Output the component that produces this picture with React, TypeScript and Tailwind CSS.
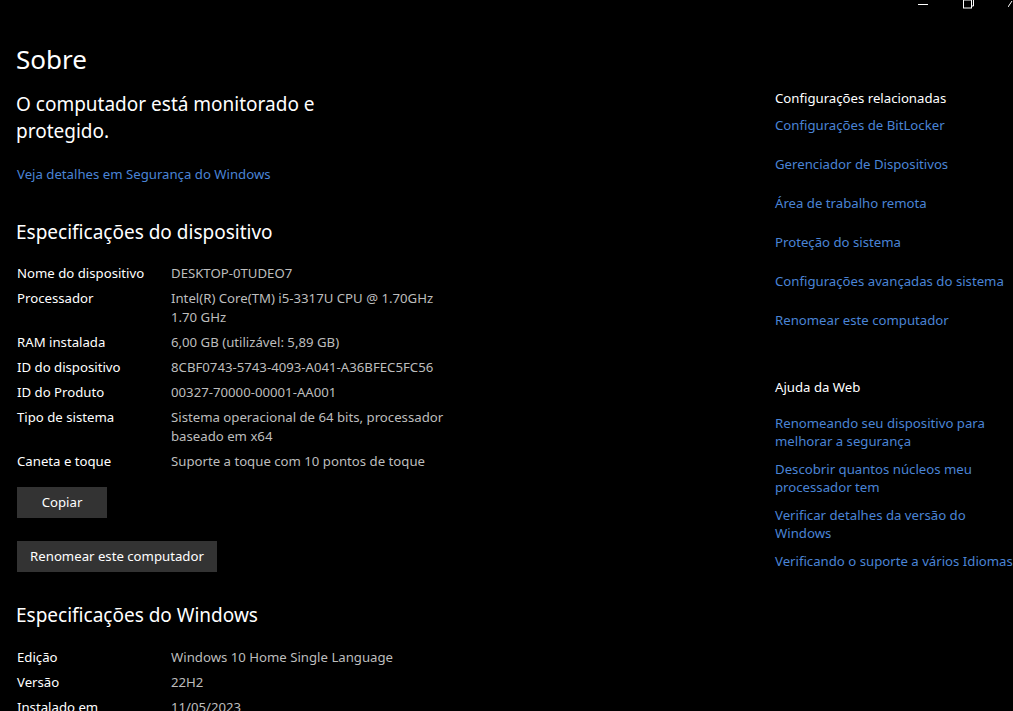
import React from "react"

const font = { fontFamily: '"Noto Sans", "Open Sans", sans-serif' }

type Spec = { label: string; value: string[] }

const deviceSpecs: Spec[] = [
  { label: "Nome do dispositivo", value: ["DESKTOP-0TUDEO7"] },
  { label: "Processador", value: ["Intel(R) Core(TM) i5-3317U CPU @ 1.70GHz", "1.70 GHz"] },
  { label: "RAM instalada", value: ["6,00 GB (utilizável: 5,89 GB)"] },
  { label: "ID do dispositivo", value: ["8CBF0743-5743-4093-A041-A36BFEC5FC56"] },
  { label: "ID do Produto", value: ["00327-70000-00001-AA001"] },
  { label: "Tipo de sistema", value: ["Sistema operacional de 64 bits, processador", "baseado em x64"] },
  { label: "Caneta e toque", value: ["Suporte a toque com 10 pontos de toque"] },
]

const windowsSpecs: Spec[] = [
  { label: "Edição", value: ["Windows 10 Home Single Language"] },
  { label: "Versão", value: ["22H2"] },
  { label: "Instalado em", value: ["11/05/2023"] },
]

const relatedLinks = [
  "Configurações de BitLocker",
  "Gerenciador de Dispositivos",
  "Área de trabalho remota",
  "Proteção do sistema",
  "Configurações avançadas do sistema",
  "Renomear este computador",
]

const webHelp = [
  ["Renomeando seu dispositivo para", "melhorar a segurança"],
  ["Descobrir quantos núcleos meu", "processador tem"],
  ["Verificar detalhes da versão do", "Windows"],
  ["Verificando o suporte a vários Idiomas"],
]

function SpecTable({ rows }: { rows: Spec[] }) {
  return (
    <div className="flex flex-col gap-[6px] pl-px text-[13.2px] leading-[19px]">
      {rows.map((row) => (
        <div key={row.label} className="flex">
          <div className="w-[154px] shrink-0 text-white">{row.label}</div>
          <div className="text-[#bdbdbd]">
            {row.value.map((line) => (
              <div key={line}>{line}</div>
            ))}
          </div>
        </div>
      ))}
    </div>
  )
}

function Button({ children, width }: { children: React.ReactNode; width: string }) {
  return (
    <button className={`${width} ml-px h-[31px] bg-[#333333] text-[13.2px] text-white`}>{children}</button>
  )
}

function CaptionButtons() {
  return (
    <div className="absolute right-0 top-0 flex h-[10px] items-start">
      <svg width="12" height="10" viewBox="0 0 12 10" className="mr-[33px]">
        <line x1="1" y1="4.5" x2="11" y2="4.5" stroke="#fff" strokeWidth="1" />
      </svg>
      <svg width="12" height="10" viewBox="0 0 12 10" className="mr-[34px]">
        <rect x="1.5" y="0" width="8" height="8" fill="none" stroke="#fff" strokeWidth="1" />
        <path d="M4 0 V-2 H11.5 V6 H9.5" fill="none" stroke="#fff" strokeWidth="1" />
      </svg>
      <svg width="5" height="10" viewBox="0 0 5 10">
        <line x1="0" y1="7" x2="4" y2="1" stroke="#fff" strokeWidth="1" />
      </svg>
    </div>
  )
}

export default function App() {
  return (
    <div className="relative h-[711px] w-full overflow-hidden bg-black text-white" style={font}>
      <CaptionButtons />
      <div className="flex">
        <div className="w-[775px] shrink-0 pl-4 pt-[40px]">
          <h1 className="text-[26px] leading-[38px] font-normal">Sobre</h1>
          <p className="mt-[13px] w-[320px] text-[19px] leading-[27px]">
            O computador está monitorado e protegido.
          </p>
          <a className="mt-[20px] block pl-px text-[13.2px] leading-[19px] text-[#4a84d6]">
            Veja detalhes em Segurança do Windows
          </a>
          <h2 className="mt-[35px] text-[19px] leading-[27px]">Especificações do dispositivo</h2>
          <div className="mt-[18px]">
            <SpecTable rows={deviceSpecs} />
          </div>
          <div className="mt-[16px]">
            <Button width="w-[90px]">Copiar</Button>
          </div>
          <div className="mt-[23px]">
            <Button width="w-[200px]">Renomear este computador</Button>
          </div>
          <h2 className="mt-[30px] text-[19px] leading-[27px]">Especificações do Windows</h2>
          <div className="mt-[19px]">
            <SpecTable rows={windowsSpecs} />
          </div>
        </div>
        <div className="flex-1 pt-[89px] text-[13.2px] leading-[19px]">
          <div className="text-white">Configurações relacionadas</div>
          <div className="mt-[8px] flex flex-col gap-[20px] text-[#4a84d6]">
            {relatedLinks.map((l) => (
              <a key={l} className="whitespace-nowrap">{l}</a>
            ))}
          </div>
          <div className="mt-[48px] text-white">Ajuda da Web</div>
          <div className="mt-[17px] flex flex-col gap-[10px] text-[#4a84d6]">
            {webHelp.map((lines) => (
              <a key={lines[0]} className="whitespace-nowrap leading-[18px]">
                {lines.map((line) => (
                  <div key={line}>{line}</div>
                ))}
              </a>
            ))}
          </div>
        </div>
      </div>
    </div>
  )
}
